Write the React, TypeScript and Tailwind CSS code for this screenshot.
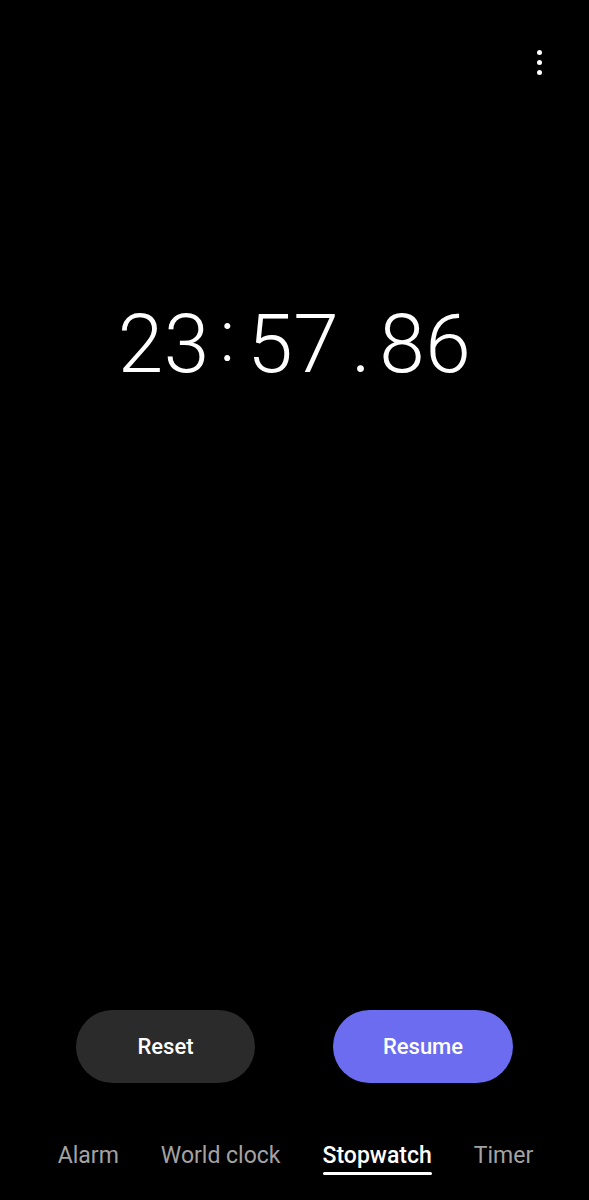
import React from 'react';

const tabs = ['Alarm', 'World clock', 'Stopwatch', 'Timer'];

export default function App() {
  const active = 'Stopwatch';

  return (
    <div
      className="flex h-[1200px] w-full flex-col bg-black text-white"
      style={{ fontFamily: 'Roboto, "Noto Sans", sans-serif' }}
    >
      {/* top bar with overflow menu */}
      <div className="flex justify-end pr-[47px] pt-[50px]">
        <button className="flex flex-col items-center gap-[5px] p-0">
          <span className="h-[5px] w-[5px] rounded-full bg-white" />
          <span className="h-[5px] w-[5px] rounded-full bg-white" />
          <span className="h-[5px] w-[5px] rounded-full bg-white" />
        </button>
      </div>

      {/* elapsed time */}
      <div className="mt-[228px] flex items-baseline justify-center text-[82px] font-light leading-none tracking-[0.5px]">
        <span>23</span>
        <span className="ml-[10px] mr-[12px] -translate-y-[11px] text-[72px]">:</span>
        <span>57</span>
        <span className="ml-[12px] mr-[8px]">.</span>
        <span>86</span>
      </div>

      <div className="flex-1" />

      {/* controls */}
      <div className="flex justify-center gap-[78px]">
        <button className="flex h-[73px] w-[179px] items-center justify-center rounded-full bg-[#2b2b2b] text-[22px] font-medium text-white">
          Reset
        </button>
        <button className="flex h-[73px] w-[180px] items-center justify-center rounded-full bg-[#6b6cf0] text-[22px] font-medium text-white">
          Resume
        </button>
      </div>

      {/* bottom tabs */}
      <nav className="mb-[25px] mt-[57px] flex justify-center gap-[42px] pl-[2px]">
        {tabs.map((t) => (
          <div key={t} className="flex flex-col items-stretch">
            <span
              className={
                t === active
                  ? 'text-[23px] font-medium leading-[32px] text-white'
                  : 'text-[23px] leading-[32px] text-[#a3a3a3]'
              }
            >
              {t}
            </span>
            <span
              className={
                t === active
                  ? 'h-[3px] rounded-full bg-white'
                  : 'h-[3px] bg-transparent'
              }
            />
          </div>
        ))}
      </nav>
    </div>
  );
}
